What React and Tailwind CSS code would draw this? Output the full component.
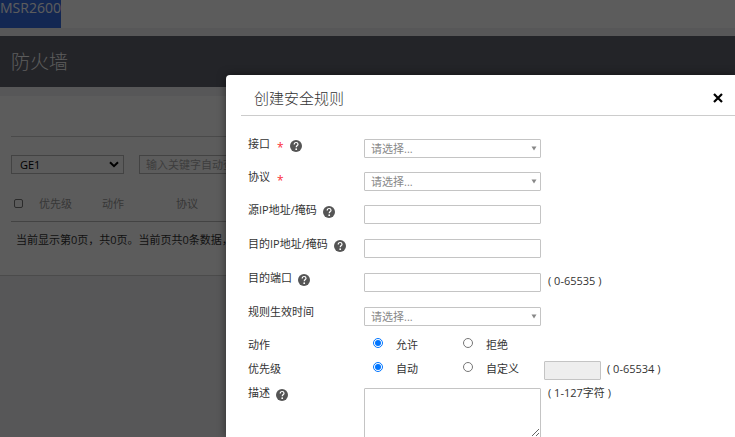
import React from "react";

const fields = [
  { id: "iface", label: "接口", type: "select", required: true, help: true },
  { id: "protocol", label: "协议", type: "select", required: true },
  { id: "src", label: "源IP地址/掩码", type: "text", help: true },
  { id: "dst", label: "目的IP地址/掩码", type: "text", help: true },
  { id: "port", label: "目的端口", type: "text", help: true, hint: "( 0-65535 )" },
  { id: "time", label: "规则生效时间", type: "select" },
];

export default function App() {
  return (
    <div className="relative h-screen overflow-hidden bg-[#f0f0f3] font-['Open_Sans','Noto_Sans_CJK_SC',sans-serif] text-[11px] leading-4 text-[#333]">
      <FirewallPage />
      <div className="absolute inset-0 bg-black/64"></div>
      <RuleDialog />
    </div>
  );
}

function FirewallPage() {
  return (
    <div>
      <header className="h-7 bg-white">
        <div className="h-7 w-fit bg-[#356ce4] text-sm leading-4 text-white">
          MSR2600
        </div>
      </header>

      <h1 className="mt-2 flex h-[51px] items-center bg-[#61646f] px-[11px] text-[19px] font-light text-white">
        防火墙
      </h1>

      <main className="mt-[9px] h-[180px] border-b border-[#d0d0d0] bg-white pl-[11px] pt-10">
        <div className="flex gap-[15px] border-t border-[#ccc] pt-[18px]">
          <div className="relative w-[113px]">
            <select
              aria-label="接口"
              className="block h-[19px] w-full appearance-none border border-[#bbb] bg-white pl-2 text-black"
            >
              <option>GE1</option>
            </select>
            <svg
              viewBox="0 0 10 7"
              className="pointer-events-none absolute right-[5px] top-[6px] h-[7px] w-[10px]"
            >
              <path d="M1 1.2 5 5.2 9 1.2" fill="none" stroke="#000" strokeWidth="2" />
            </svg>
          </div>
          <input
            type="text"
            aria-label="查询"
            placeholder="输入关键字自动查询"
            className="h-[19px] w-[160px] border border-[#bbb] bg-white px-[6px] placeholder:text-[#aaa]"
          />
        </div>

        <table className="mt-[13px] w-full table-fixed border-b border-[#bbb] text-left text-[#999]">
          <thead>
            <tr className="h-[34px]">
              <th className="w-7 pl-[3px]">
                <input
                  type="checkbox"
                  aria-label="全选"
                  className="block size-[9px] appearance-none rounded-xs border border-[#777] bg-white"
                />
              </th>
              <th className="w-[63px] font-normal">优先级</th>
              <th className="w-[74px] font-normal">动作</th>
              <th className="font-normal">协议</th>
            </tr>
          </thead>
        </table>
        <p className="mt-[10px] pl-[5px]">
          当前显示第0页，共0页。当前页共0条数据，已
        </p>
      </main>
    </div>
  );
}

function RuleDialog() {
  return (
    <div
      role="dialog"
      aria-label="创建安全规则"
      className="absolute bottom-0 left-[226px] right-0 top-[75px] overflow-hidden rounded-tl-sm bg-white shadow-[0_0_8px_rgba(0,0,0,0.5)]"
    >
      <div className="ml-[15px] flex h-[41px] items-center justify-between border-b border-[#ccc] pl-[13px] pr-3 pt-[6px]">
        <h2 className="text-[15px] font-light">创建安全规则</h2>
        <button type="button" aria-label="关闭" className="flex">
          <svg viewBox="0 0 10 10" className="size-[10px]">
            <path d="M1 1 9 9M9 1 1 9" stroke="#000" strokeWidth="2.2" />
          </svg>
        </button>
      </div>

      <form className="pl-[22px] pt-5">
        {fields.map((f) =>
          f.type === "select" ? (
            <div key={f.id} className="flex h-[33px] items-start">
              <Label htmlFor={f.id} text={f.label} required={f.required} help={f.help} />
              <div className="relative mt-[3px] w-[177px]">
                <select
                  id={f.id}
                  className="block h-[19px] w-full appearance-none rounded-[1px] border border-[#c4c4c4] bg-white pl-[6px] text-[#888]"
                >
                  <option>请选择...</option>
                </select>
                <svg
                  viewBox="0 0 6 5"
                  className="pointer-events-none absolute right-1 top-[7px] h-[5px] w-[6px]"
                >
                  <path d="M0.5 0.5H5.5L3 4.5Z" fill="#888" />
                </svg>
              </div>
            </div>
          ) : (
            <div key={f.id} className="flex h-[34px] items-start">
              <Label htmlFor={f.id} text={f.label} required={f.required} help={f.help} />
              <input
                id={f.id}
                type="text"
                className="mt-[3px] h-[19px] w-[177px] rounded-[1px] border border-[#c4c4c4] px-[6px]"
              />
              {f.hint && <span className="ml-[7px] mt-[3px]">{f.hint}</span>}
            </div>
          )
        )}

        <div className="flex h-6 items-start">
          <span className="w-[116px]">动作</span>
          <Radio name="action" text="允许" checked />
          <Radio name="action" text="拒绝" />
        </div>
        <div className="flex h-6 items-start">
          <span className="w-[116px]">优先级</span>
          <Radio name="priority" text="自动" checked />
          <Radio name="priority" text="自定义" />
          <input
            type="text"
            aria-label="优先级"
            disabled
            className="h-[19px] w-[57px] rounded-[1px] border border-[#c4c4c4] bg-[#eee]"
          />
          <span className="ml-[6px]">( 0-65534 )</span>
        </div>
        <div className="flex items-start">
          <Label htmlFor="desc" text="描述" help />
          <textarea id="desc" className="mt-[3px] h-[50px] w-[177px] rounded-[1px] border border-[#c4c4c4]" />
          <span className="ml-[7px]">( 1-127字符 )</span>
        </div>
      </form>
    </div>
  );
}

function Label({ htmlFor, text, required, help }) {
  return (
    <div className="flex w-[116px] items-start">
      <label htmlFor={htmlFor}>{text}</label>
      {required && <span className="ml-[7px] mt-1 text-xs leading-4 text-red-500">*</span>}
      {help && <HelpIcon />}
    </div>
  );
}

function HelpIcon() {
  return (
    <svg viewBox="0 0 12 12" className="ml-[6px] mt-1 size-3">
      <circle cx="6" cy="6" r="6" fill="#555" />
      <path
        d="M4.2 4.4C4.2 3.1 5 2.5 6.1 2.5S8 3.2 8 4.2C8 5.5 6.3 5.6 6.2 7.3"
        fill="none"
        stroke="#fff"
        strokeWidth="1.2"
      />
      <circle cx="6.2" cy="9.2" r="0.9" fill="#fff" />
    </svg>
  );
}

function Radio({ name, text, checked }) {
  return (
    <label className="flex w-[90px] items-start pl-[9px]">
      <input
        type="radio"
        name={name}
        defaultChecked={checked}
        className="mt-px size-[10px] accent-[#0075ff]"
      />
      <span className="ml-[13px]">{text}</span>
    </label>
  );
}
